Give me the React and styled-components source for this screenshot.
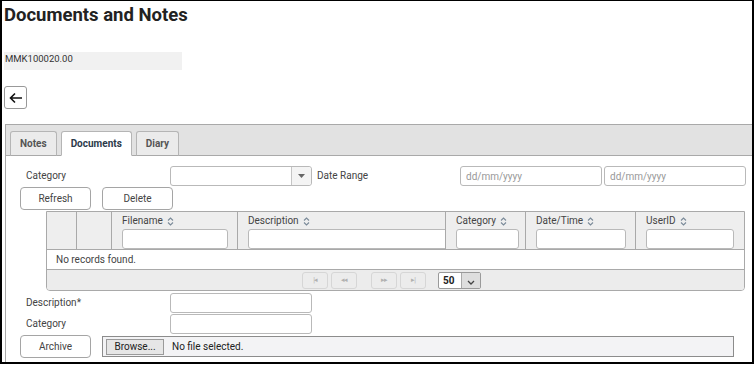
import React from 'react';
import styled, { createGlobalStyle } from 'styled-components';

const GlobalStyle = createGlobalStyle`
  html, body {
    margin: 0;
    padding: 0;
    background: #fff;
  }
  body {
    font-family: Roboto, "Liberation Sans", Arial, sans-serif;
    color: #444;
  }
  * {
    box-sizing: border-box;
  }
`;

const columns = [
  { key: 'a', width: 30 },
  { key: 'b', width: 35 },
  { key: 'filename', label: 'Filename', width: 126, input: 106 },
  { key: 'description', label: 'Description', width: 208, input: 210 },
  { key: 'category', label: 'Category', width: 80, input: 63 },
  { key: 'datetime', label: 'Date/Time', width: 110, input: 90 },
  { key: 'userid', label: 'UserID', width: 109, input: 88 },
];

const SortIcon = () => (
  <SortSvg width="7" height="9" viewBox="0 0 7 9">
    <path d="M1 3.5 L3.5 1 L6 3.5" fill="none" stroke="#7a8a99" strokeWidth="1.1" />
    <path d="M1 5.5 L3.5 8 L6 5.5" fill="none" stroke="#7a8a99" strokeWidth="1.1" />
  </SortSvg>
);

const App = () => {
  return (
    <Frame>
      <GlobalStyle />
      <Title>Documents and Notes</Title>
      <RefBar>MMK100020.00</RefBar>
      <BackButton aria-label="Back">
        <svg width="14" height="12" viewBox="0 0 14 12">
          <path d="M13 6 H2 M6 1.5 L1.5 6 L6 10.5" fill="none" stroke="#111" strokeWidth="1.6" />
        </svg>
      </BackButton>

      <Panel>
        <TabStrip>
          <Tab>Notes</Tab>
          <Tab active>Documents</Tab>
          <Tab>Diary</Tab>
        </TabStrip>

        <Content>
          <FieldRow>
            <Label>Category</Label>
            <SelectBox>
              <SelectArrow>
                <svg width="7" height="4" viewBox="0 0 7 4">
                  <path d="M0 0 H7 L3.5 4 Z" fill="#666" />
                </svg>
              </SelectArrow>
            </SelectBox>
            <Label wide>Date Range</Label>
            <TextInput placeholder="dd/mm/yyyy" w={142} />
            <TextInput placeholder="dd/mm/yyyy" w={142} />
          </FieldRow>

          <ButtonRow>
            <Button>Refresh</Button>
            <Button>Delete</Button>
          </ButtonRow>

          <Grid>
            <HeaderRow>
              {columns.map((c) => (
                <HeadCell key={c.key} w={c.width}>
                  {c.label && (
                    <>
                      <HeadLabel>
                        {c.label} <SortIcon />
                      </HeadLabel>
                      <FilterInput w={c.input} />
                    </>
                  )}
                </HeadCell>
              ))}
            </HeaderRow>
            <EmptyRow>No records found.</EmptyRow>
            <Pager>
              <PageButton>|◂</PageButton>
              <PageButton>◂◂</PageButton>
              <PageButton gap>▸▸</PageButton>
              <PageButton>▸|</PageButton>
              <PageSize>
                <PageSizeValue>50</PageSizeValue>
                <PageSizeArrow>
                  <svg width="8" height="5" viewBox="0 0 8 5">
                    <path d="M1 1 L4 4 L7 1" fill="none" stroke="#444" strokeWidth="1.3" />
                  </svg>
                </PageSizeArrow>
              </PageSize>
            </Pager>
          </Grid>

          <FormRow top={2}>
            <Label>Description*</Label>
            <TextInput w={142} />
          </FormRow>
          <FormRow top={1}>
            <Label>Category</Label>
            <TextInput w={142} />
          </FormRow>
          <ArchiveRow>
            <Button>Archive</Button>
            <FileBox>
              <BrowseButton>Browse...</BrowseButton>
              <FileText>No file selected.</FileText>
            </FileBox>
          </ArchiveRow>
        </Content>
      </Panel>
    </Frame>
  );
};

const Frame = styled.div`
  width: 754px;
  height: 364px;
  border: 2px solid #000;
  border-top-width: 1px;
  overflow: hidden;
  padding: 0 0 0 2px;
`;

const Title = styled.h1`
  margin: 3px 0 0;
  font-size: 18.5px;
  line-height: 22px;
  font-weight: 700;
  color: #222;
`;

const RefBar = styled.div`
  margin-top: 26px;
  width: 178px;
  height: 18px;
  background: #f1f1f1;
  font-size: 9.5px;
  line-height: 14px;
  padding-left: 1px;
  color: #333;
`;

const BackButton = styled.button`
  display: flex;
  align-items: center;
  justify-content: center;
  margin-top: 16px;
  width: 23px;
  height: 23px;
  padding: 0;
  border: 1px solid #999;
  border-radius: 3px;
  background: #fff;
`;

const Panel = styled.div`
  margin: 15px 0 0 1px;
  width: 760px;
  height: 280px;
  border: 1px solid #a9a9a9;
`;

const TabStrip = styled.div`
  display: flex;
  gap: 4px;
  align-items: flex-end;
  height: 31px;
  padding-left: 4px;
  background: #e2e2e2;
  border-bottom: 1px solid #a9a9a9;
`;

const Tab = styled.div`
  height: 25px;
  margin-bottom: -1px;
  padding: 0 9px;
  display: flex;
  align-items: center;
  font-size: 10px;
  font-weight: 700;
  color: ${(p) => (p.active ? '#2c3a4a' : '#555')};
  background: ${(p) => (p.active ? '#fff' : '#ebebeb')};
  border: 1px solid #b5b5b5;
  border-bottom-color: ${(p) => (p.active ? '#fff' : '#a9a9a9')};
  border-radius: 3px 3px 0 0;
`;

const Content = styled.div`
  padding: 10px 0 0 14px;
`;

const FieldRow = styled.div`
  display: flex;
  align-items: center;
  height: 20px;
`;

const Label = styled.div`
  width: ${(p) => (p.wide ? 143 : 150)}px;
  padding-left: ${(p) => (p.wide ? 0 : 6)}px;
  font-size: 10px;
  color: #444;
  align-self: flex-start;
  padding-top: 4px;
`;

const inputBase = `
  height: 20px;
  border: 1px solid #b9b9b9;
  border-radius: 3px;
  background: #fff;
`;

const TextInput = styled.input`
  ${inputBase}
  width: ${(p) => p.w}px;
  margin-right: 2px;
  padding: 0 5px;
  font-family: inherit;
  font-size: 10px;
  color: #333;
  &::placeholder {
    color: #999;
  }
`;

const SelectBox = styled.div`
  ${inputBase}
  width: 142px;
  margin-right: 5px;
  display: flex;
  justify-content: flex-end;
`;

const SelectArrow = styled.div`
  width: 20px;
  display: flex;
  align-items: center;
  justify-content: center;
  border-left: 1px solid #c5c5c5;
  background: #f4f4f4;
  border-radius: 0 3px 3px 0;
`;

const ButtonRow = styled.div`
  display: flex;
  gap: 11px;
  margin-top: 1px;
`;

const Button = styled.button`
  width: 71px;
  height: 23px;
  border: 1px solid #a5a5a5;
  border-radius: 4px;
  background: #fff;
  font-family: inherit;
  font-size: 10px;
  color: #444;
  padding: 0;
`;

const Grid = styled.div`
  margin: 1px 0 0 26px;
  width: 699px;
  border: 1px solid #a9a9a9;
  border-radius: 0 0 4px 4px;
  overflow: hidden;
`;

const HeaderRow = styled.div`
  display: flex;
  height: 38px;
  background: #eee;
  border-bottom: 1px solid #a9a9a9;
`;

const HeadCell = styled.div`
  width: ${(p) => p.w}px;
  flex: none;
  padding: 3px 0 0 10px;
  border-right: 1px solid #a9a9a9;
  overflow: hidden;
  &:last-child {
    border-right: none;
  }
`;

const HeadLabel = styled.div`
  display: flex;
  align-items: center;
  gap: 4px;
  font-size: 10px;
  line-height: 12px;
  color: #444;
`;

const SortSvg = styled.svg`
  flex: none;
`;

const FilterInput = styled.div`
  ${inputBase}
  margin-top: 2px;
  width: ${(p) => p.w}px;
  height: 20px;
`;

const EmptyRow = styled.div`
  height: 20px;
  padding: 4px 0 0 9px;
  font-size: 10px;
  color: #444;
  border-bottom: 1px solid #a9a9a9;
`;

const Pager = styled.div`
  display: flex;
  align-items: center;
  justify-content: center;
  gap: 3px;
  height: 20px;
  padding-right: 8px;
  background: #ececec;
`;

const PageButton = styled.div`
  width: 26px;
  height: 17px;
  margin-left: ${(p) => (p.gap ? 11 : 0)}px;
  display: flex;
  align-items: center;
  justify-content: center;
  border: 1px solid #d6d6d6;
  border-radius: 3px;
  font-size: 7px;
  letter-spacing: -1px;
  color: #b0b0b0;
`;

const PageSize = styled.div`
  display: flex;
  margin-left: 9px;
  width: 43px;
  height: 17px;
  border: 1px solid #9a9a9a;
  border-radius: 2px;
  background: #fff;
`;

const PageSizeValue = styled.div`
  flex: 1;
  padding-left: 4px;
  font-size: 10px;
  font-weight: 700;
  line-height: 15px;
  color: #222;
`;

const PageSizeArrow = styled.div`
  width: 19px;
  display: flex;
  align-items: flex-end;
  justify-content: center;
  padding-bottom: 3px;
  background: #dedede;
  border-left: 1px solid #aaa;
`;

const FormRow = styled.div`
  display: flex;
  align-items: center;
  height: 20px;
  margin-top: ${(p) => p.top}px;
`;

const ArchiveRow = styled.div`
  display: flex;
  align-items: flex-start;
  gap: 11px;
  margin-top: 1px;
`;

const FileBox = styled.div`
  display: flex;
  align-items: center;
  margin-top: 1px;
  width: 632px;
  height: 21px;
  padding-left: 3px;
  border: 1px solid #8c8c8c;
  background: #f3f3f5;
`;

const BrowseButton = styled.div`
  width: 58px;
  height: 16px;
  display: flex;
  align-items: center;
  justify-content: center;
  border: 1px solid #9a9a9a;
  background: #e6e6e6;
  font-size: 10px;
  color: #222;
`;

const FileText = styled.span`
  margin-left: 8px;
  font-size: 10px;
  color: #222;
`;

export default App;
